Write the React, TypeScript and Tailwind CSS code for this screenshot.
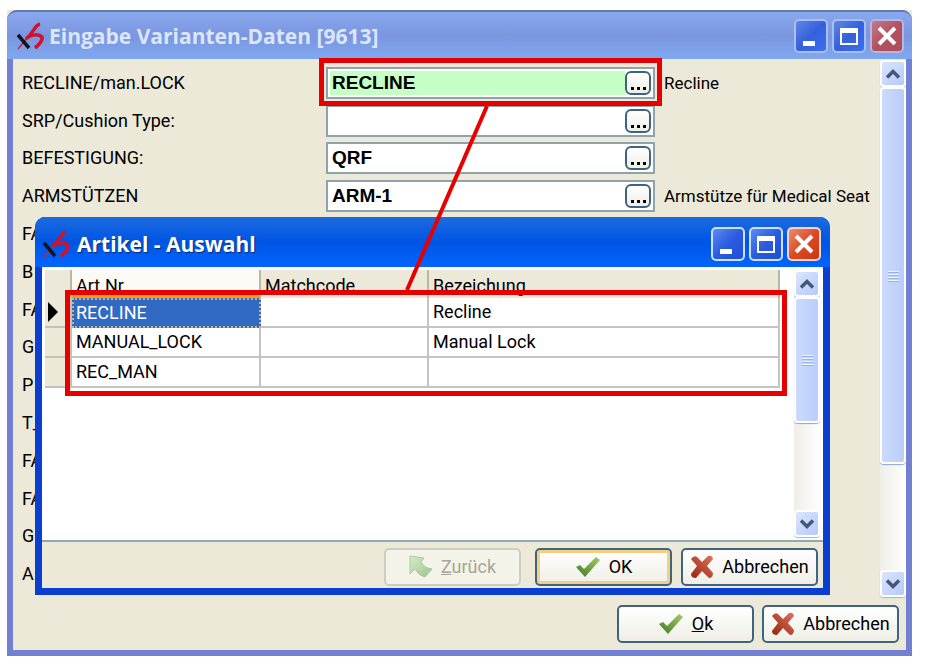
import type { ReactNode } from "react";

type Field = { id: string; label: string; value?: string; note?: string; editable?: boolean; active?: boolean };

const fields: Field[] = [
  { id: "recline", label: "RECLINE/man.LOCK", value: "RECLINE", note: "Recline", editable: true, active: true },
  { id: "srp", label: "SRP/Cushion Type:", value: "", editable: true },
  { id: "befestigung", label: "BEFESTIGUNG:", value: "QRF", editable: true },
  { id: "arm", label: "ARMSTÜTZEN", value: "ARM-1", note: "Armstütze für Medical Seat", editable: true },
  { id: "f5", label: "FA" },
  { id: "f6", label: "B" },
  { id: "f7", label: "FA" },
  { id: "f8", label: "G" },
  { id: "f9", label: "P" },
  { id: "f10", label: "T_" },
  { id: "f11", label: "FA" },
  { id: "f12", label: "FA" },
  { id: "f13", label: "G" },
  { id: "f14", label: "A" },
];

const articles = [
  { nr: "RECLINE", match: "", text: "Recline" },
  { nr: "MANUAL_LOCK", match: "", text: "Manual Lock" },
  { nr: "REC_MAN", match: "", text: "" },
];

function Logo() {
  return (
    <svg viewBox="0 0 28 28" className="size-7 shrink-0" fill="none" aria-hidden="true">
      <path d="M1 27L11 15" stroke="#c62340" strokeWidth="1.500" />
      <path d="M1 13L12 26" stroke="#14141e" strokeWidth="3.500" />
      <path d="M23 2C18 3 17 10 10 16C15 12 22 12 25 15C26 18 22 23 18 26" stroke="#d1122b" strokeWidth="3.500" strokeLinejoin="round" />
    </svg>
  );
}

function CaptionButtons({ active }: { active?: boolean }) {
  const base = "flex size-[34px] items-center justify-center rounded-[5px] border-2 ";
  const blue = active
    ? "border-[#cfe0ff] bg-linear-to-br from-[#5c8bf0] via-[#2a5be0] to-[#1c4fd8]"
    : "border-[#a9bff2] bg-linear-to-br from-[#5f86e6] via-[#3560dc] to-[#3c6ff0]";
  const red = active
    ? "border-[#f5d5cf] bg-linear-to-br from-[#ee8a6c] via-[#dc4a24] to-[#c8380f]"
    : "border-[#b9b4e4] bg-linear-to-br from-[#c07a8c] via-[#b25160] to-[#ac4d5c]";
  return (
    <div className="flex gap-1">
      <button aria-label="Minimieren" className={base + blue}>
        <svg viewBox="0 0 28 28" className="size-7"><path d="M6 19h12v5H6z" fill="#fff" /></svg>
      </button>
      <button aria-label="Maximieren" className={base + blue}>
        <svg viewBox="0 0 28 28" className="size-7" fill="none">
          <path d="M6 7h16v15H6z" stroke="#fff" strokeWidth="2" />
          <path d="M5 6h18v5H5z" fill="#fff" />
        </svg>
      </button>
      <button aria-label="Schließen" className={base + red}>
        <svg viewBox="0 0 28 28" className="size-7" fill="none">
          <path d="M6 6L22 22M22 6L6 22" stroke="#fff" strokeWidth="4" />
        </svg>
      </button>
    </div>
  );
}

function ArrowButton({ dir }: { dir: "up" | "down" }) {
  return (
    <button
      aria-label={dir === "up" ? "Nach oben" : "Nach unten"}
      className="flex h-[27px] w-full shrink-0 items-center justify-center rounded-[4px] border-2 border-white bg-linear-to-br from-[#dbe5fe] to-[#b6c9f8] shadow-[0_1px_1px_#9db5dc]"
    >
      <svg viewBox="0 0 16 10" className="w-4" fill="none">
        <path d={dir === "up" ? "M2 8.500L8 2.500L14 8.500" : "M2 1.500L8 7.500L14 1.500"} stroke="#44587c" strokeWidth="3.500" />
      </svg>
    </button>
  );
}

function Scrollbar({ thumb }: { thumb: string }) {
  return (
    <div className="flex w-[26px] shrink-0 flex-col bg-linear-to-r from-[#efeee8] to-[#fefefd]">
      <ArrowButton dir="up" />
      <div className="min-h-0 flex-1">
        <div className={"flex w-full items-center justify-center rounded-[4px] border-2 border-white bg-linear-to-r from-[#cbdafc] to-[#bacdfb] shadow-[0_1px_1px_#8aa6d6] " + thumb}>
          <div className="flex w-[11px] flex-col gap-0.5">
            <i className="h-px bg-[#eef4fe] shadow-[0_1px_0_#98b3e8]" />
            <i className="h-px bg-[#eef4fe] shadow-[0_1px_0_#98b3e8]" />
            <i className="h-px bg-[#eef4fe] shadow-[0_1px_0_#98b3e8]" />
            <i className="h-px bg-[#eef4fe] shadow-[0_1px_0_#98b3e8]" />
          </div>
        </div>
      </div>
      <ArrowButton dir="down" />
    </div>
  );
}

function Check() {
  return (
    <svg viewBox="0 0 26 22" className="w-[26px]" aria-hidden="true">
      <defs>
        <linearGradient id="check" x1="0" y1="1" x2="1" y2="0">
          <stop offset="0" stopColor="#3f7a22" />
          <stop offset="1" stopColor="#a3cc62" />
        </linearGradient>
      </defs>
      <path d="M1 11L5 9L9 13L21 1L25 4L10 21Z" fill="url(#check)" />
    </svg>
  );
}

function Cross() {
  return (
    <svg viewBox="0 0 24 24" className="w-6" aria-hidden="true">
      <defs>
        <linearGradient id="cross" x1="0" y1="1" x2="1" y2="0">
          <stop offset="0" stopColor="#96240e" />
          <stop offset="1" stopColor="#dc7560" />
        </linearGradient>
      </defs>
      <path
        d="M1 4Q4 0 7 2L12 7L18 1Q22 0 23 4L17 11L23 18Q23 23 19 23L12 16L6 23Q1 23 1 19L7 11Z"
        fill="url(#cross)"
      />
    </svg>
  );
}

function BackArrow() {
  return (
    <svg viewBox="0 0 24 24" className="w-6" aria-hidden="true">
      <defs>
        <linearGradient id="back" x1="0" y1="0" x2="1" y2="1">
          <stop offset="0" stopColor="#d6ebcb" />
          <stop offset="1" stopColor="#9cc48c" />
        </linearGradient>
      </defs>
      <path d="M1 1L15 3L12 7Q15 13 23 14L16 22Q10 21 6 14L1 19Z" fill="url(#back)" stroke="#a9cb9b" />
    </svg>
  );
}

function PushButton({ icon, children, look = "normal" }: { icon: ReactNode; children: ReactNode; look?: "normal" | "default" | "disabled" }) {
  const looks = {
    normal: "border-[#3f6482] bg-linear-to-b from-white to-[#efeee6] text-black",
    default: "border-[#3f6482] bg-linear-to-b from-white to-[#efeee6] text-black shadow-[inset_0_0_0_3px_#f3cf81]",
    disabled: "border-[#cfcdbf] bg-[#f4f3e9] text-[#a6a595]",
  };
  return (
    <button
      disabled={look === "disabled"}
      className={"flex h-[38px] w-[137px] items-center justify-center gap-2 rounded-[5px] border-2 whitespace-nowrap " + looks[look]}
    >
      {icon}
      <span>{children}</span>
    </button>
  );
}

function FieldRow({ field }: { field: Field }) {
  return (
    <div className="flex min-h-0 items-center">
      <label htmlFor={field.editable ? field.id : undefined} className="w-[304px] shrink-0">
        {field.label}
      </label>
      {field.editable && (
        <div className="relative flex h-8 w-[329px] shrink-0 items-center border-2 border-[#8fa3ac] bg-white p-0.5">
          <input
            id={field.id}
            defaultValue={field.value}
            className={"h-6 min-w-0 flex-1 pl-0.5 font-['Liberation_Sans',sans-serif] text-[19px] font-bold outline-none " + (field.active ? "bg-[#c6ffc6]" : "bg-white")}
          />
          <button
            aria-label={field.label + " auswählen"}
            className="flex h-6 w-[26px] items-end justify-center gap-[3px] rounded-[6px] border-2 border-[#3f6482] bg-linear-to-b from-white to-[#efeee6] pb-[3px]"
          >
            <i className="size-[3px] bg-black" />
            <i className="size-[3px] bg-black" />
            <i className="size-[3px] bg-black" />
          </button>
          {field.active && <div className="pointer-events-none absolute -inset-x-[9px] -top-[11px] -bottom-[9px] z-10 border-[5px] border-[#e60000]" />}
        </div>
      )}
      {field.note && <span className="pl-[9px] text-[17px] whitespace-nowrap">{field.note}</span>}
    </div>
  );
}

function ArticleDialog() {
  const th = "border-r-2 border-[#b9b7a8] p-0 pt-1 pl-1 text-left font-normal";
  const td = "border-r-2 border-b-2 border-[#c4c4c4] p-0 pl-1";
  return (
    <section
      aria-label="Artikel - Auswahl"
      className="absolute top-[207px] right-[76px] left-[22px] flex flex-col rounded-t-[10px] border-x-[7px] border-b-[7px] border-[#0b3fd0] bg-[#0b3fd0]"
    >
      <header className="-mx-[7px] flex h-[50px] items-center rounded-t-[10px] bg-linear-to-b from-[#1c6be0] via-[#0054e3] to-[#0066ff] pt-1 pr-[9px] pl-2">
        <Logo />
        <h2 className="flex-1 pl-1.5 font-['Open_Sans',sans-serif] text-[21px] font-bold text-white [text-shadow:1px_1px_1px_#0a2a80]">Artikel - Auswahl</h2>
        <CaptionButtons active />
      </header>
      <div className="flex h-[275px] justify-between border-b-2 border-[#93a9b0] bg-white p-[3px]">
        <div className="relative">
          <table className="w-[735px] table-fixed border-separate border-spacing-0">
            <colgroup>
              <col className="w-[27px]" />
              <col className="w-[189px]" />
              <col className="w-[168px]" />
              <col />
            </colgroup>
            <thead>
              <tr className="h-7 bg-[#ece9d8]">
                <th aria-label="Zeile" className={th} />
                <th className={th + " bg-[#fbfaf4] shadow-[inset_0_-4px_0_#f59a1d]"}>Art.Nr.</th>
                <th className={th}>Matchcode</th>
                <th className={th}>Bezeichung</th>
              </tr>
            </thead>
            <tbody>
              {articles.map((a, i) => (
                <tr key={a.nr} className="h-[30px]">
                  <td className="border-r-2 border-b-2 border-[#c4c2b4] bg-[#ece9d8] p-0">
                    {i === 0 && (
                      <svg viewBox="0 0 10 20" className="ml-[3px] h-5 w-2.5"><path d="M0 0L10 10L0 20Z" /></svg>
                    )}
                  </td>
                  <td className={i === 0 ? "border-2 border-dotted border-[#c9b37a] bg-[#316ac5] p-0 pl-0.5 text-white" : td}>{a.nr}</td>
                  <td className={td}>{a.match}</td>
                  <td className={td}>{a.text}</td>
                </tr>
              ))}
            </tbody>
          </table>
          <div className="pointer-events-none absolute top-5 -right-[7px] left-5 h-[106px] border-[5px] border-[#e60000]" />
        </div>
        <Scrollbar thumb="h-[126px]" />
      </div>
      <footer className="flex h-[46px] items-center justify-end bg-[#ece9d8] pt-1 pr-[5px]">
        <PushButton look="disabled" icon={<BackArrow />}><u>Z</u>urück</PushButton>
        <div className="w-3.5" />
        <PushButton look="default" icon={<Check />}>OK</PushButton>
        <div className="w-[9px]" />
        <PushButton icon={<Cross />}>Abbrechen</PushButton>
      </footer>
    </section>
  );
}

export default function App() {
  return (
    <main className="bg-white pt-2.5 pr-3.5 pb-2 pl-[7px] font-[Roboto,sans-serif] text-[18px] leading-6 text-black">
      <div className="bg-[#ece9d8]">
        <section aria-label="Eingabe Varianten-Daten" className="relative rounded-t-[10px] border-x-[6px] border-b-[6px] border-[#7280d4] bg-[#7280d4]">
          <header className="-mx-1.5 flex h-[49px] items-center rounded-t-[10px] border-t-2 border-[#6378ba] bg-linear-to-b from-[#8aa8ee] via-[#7a96df] to-[#7fa8f0] pr-2 pl-2.5">
            <Logo />
            <h1 className="flex-1 pl-1 font-['Open_Sans',sans-serif] text-[21px] font-bold text-[#dce6fb]">Eingabe Varianten-Daten [9613]</h1>
            <CaptionButtons />
          </header>
          <div className="bg-[#ece9d8]">
            <div className="flex h-[538px] pt-px">
              <form className="grid min-w-0 flex-1 auto-rows-fr pt-1 pb-1 pl-[9px]">
                {fields.map((f) => (
                  <FieldRow key={f.id} field={f} />
                ))}
              </form>
              <Scrollbar thumb="h-[377px]" />
            </div>
            <footer className="flex h-[53px] items-start justify-end gap-2 pt-2 pr-[7px]">
              <PushButton icon={<Check />}><u>O</u>k</PushButton>
              <PushButton icon={<Cross />}>Abbrechen</PushButton>
            </footer>
          </div>
          <ArticleDialog />
          <svg viewBox="0 0 84 188" className="pointer-events-none absolute top-[94px] left-[392px] h-[188px] w-[84px]" aria-hidden="true">
            <path d="M82 2L2 186" stroke="#e60000" strokeWidth="4" />
          </svg>
        </section>
      </div>
    </main>
  );
}
